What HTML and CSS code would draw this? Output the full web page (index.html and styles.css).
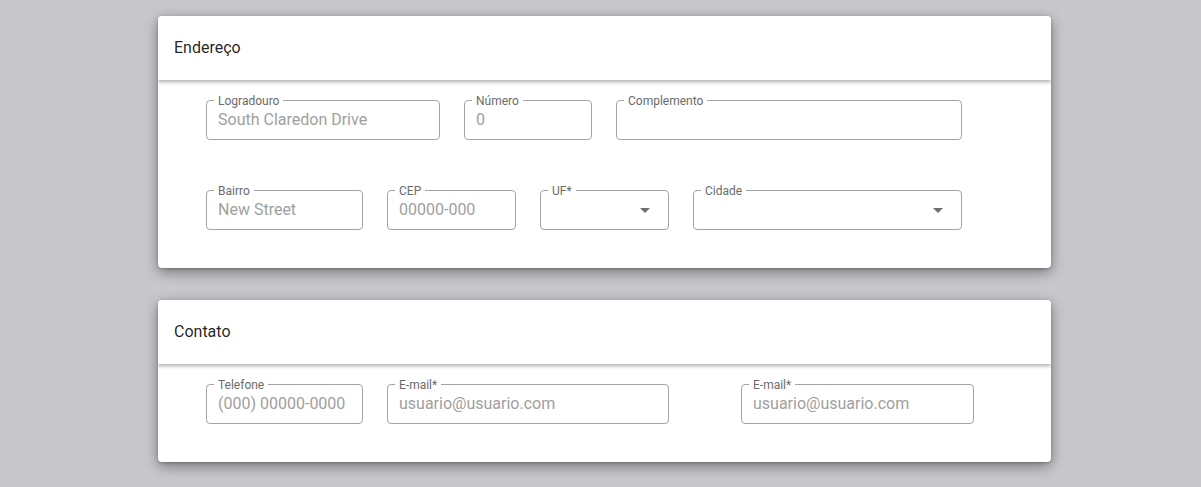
FILE: index.html
```html
<!DOCTYPE html>
<html lang="pt-BR">
<head>
<meta charset="utf-8">
<title>Cadastro</title>
<link rel="stylesheet" href="styles.css">
</head>
<body>
<main class="page">
  <section class="card">
    <header class="card-header">Endereço</header>
    <div class="card-body">
      <div class="row">
        <div class="field w-234"><span class="label">Logradouro</span><span class="value">South Claredon Drive</span></div>
        <div class="field w-128"><span class="label">Número</span><span class="value">0</span></div>
        <div class="field w-346"><span class="label">Complemento</span><span class="value"></span></div>
      </div>
      <div class="row">
        <div class="field w-157"><span class="label">Bairro</span><span class="value">New Street</span></div>
        <div class="field w-129"><span class="label">CEP</span><span class="value">00000-000</span></div>
        <div class="field select w-129"><span class="label">UF*</span><span class="value"></span><span class="arrow"></span></div>
        <div class="field select w-269"><span class="label">Cidade</span><span class="value"></span><span class="arrow"></span></div>
      </div>
    </div>
  </section>
  <section class="card">
    <header class="card-header">Contato</header>
    <div class="card-body">
      <div class="row">
        <div class="field w-157"><span class="label">Telefone</span><span class="value">(000) 00000-0000</span></div>
        <div class="field w-282"><span class="label">E-mail*</span><span class="value">usuario@usuario.com</span></div>
        <div class="field w-233 push"><span class="label">E-mail*</span><span class="value">usuario@usuario.com</span></div>
      </div>
    </div>
  </section>
</main>
</body>
</html>
```
FILE: styles.css
```css
html, body {
  margin: 0;
  padding: 0;
}
body {
  background: #c8c7cc;
  font-family: Roboto, "Liberation Sans", sans-serif;
  height: 487px;
  overflow: hidden;
}
.page {
  display: flex;
  flex-direction: column;
  gap: 32px;
  padding: 16px 0 0 158px;
}
.card {
  width: 893px;
  background: #fff;
  border-radius: 4px;
  box-shadow: 0 4px 14px rgba(0, 0, 0, 0.42), 0 1px 3px rgba(0, 0, 0, 0.2);
  overflow: hidden;
}
.card-header {
  position: relative;
  box-sizing: border-box;
  height: 64px;
  display: flex;
  align-items: center;
  padding: 0 0 2px 16px;
  font-size: 16px;
  color: rgba(0, 0, 0, 0.87);
  background: #fff;
  box-shadow: 0 2px 4px rgba(0, 0, 0, 0.32);
}
.card-body {
  display: flex;
  flex-direction: column;
  gap: 50px;
  padding: 20px 48px 38px;
}
.row {
  display: flex;
  gap: 24px;
}
.field {
  position: relative;
  box-sizing: border-box;
  height: 40px;
  border: 1px solid #a3a3a3;
  border-radius: 4px;
  display: flex;
  align-items: center;
  padding: 0 11px 2px;
}
.label {
  position: absolute;
  left: 7px;
  top: -7px;
  padding: 0 4px;
  background: #fff;
  font-size: 12px;
  line-height: 14px;
  color: #6b6b6b;
}
.value {
  font-size: 16px;
  color: #a0a0a0;
  white-space: nowrap;
}
.arrow {
  position: absolute;
  right: 18px;
  top: 17px;
  width: 0;
  height: 0;
  border-left: 5px solid transparent;
  border-right: 5px solid transparent;
  border-top: 5px solid #6e6e6e;
}
.push { margin-left: 48px; }
.w-128 { width: 128px; }
.w-129 { width: 129px; }
.w-157 { width: 157px; }
.w-233 { width: 233px; }
.w-234 { width: 234px; }
.w-269 { width: 269px; }
.w-282 { width: 282px; }
.w-346 { width: 346px; }
```
